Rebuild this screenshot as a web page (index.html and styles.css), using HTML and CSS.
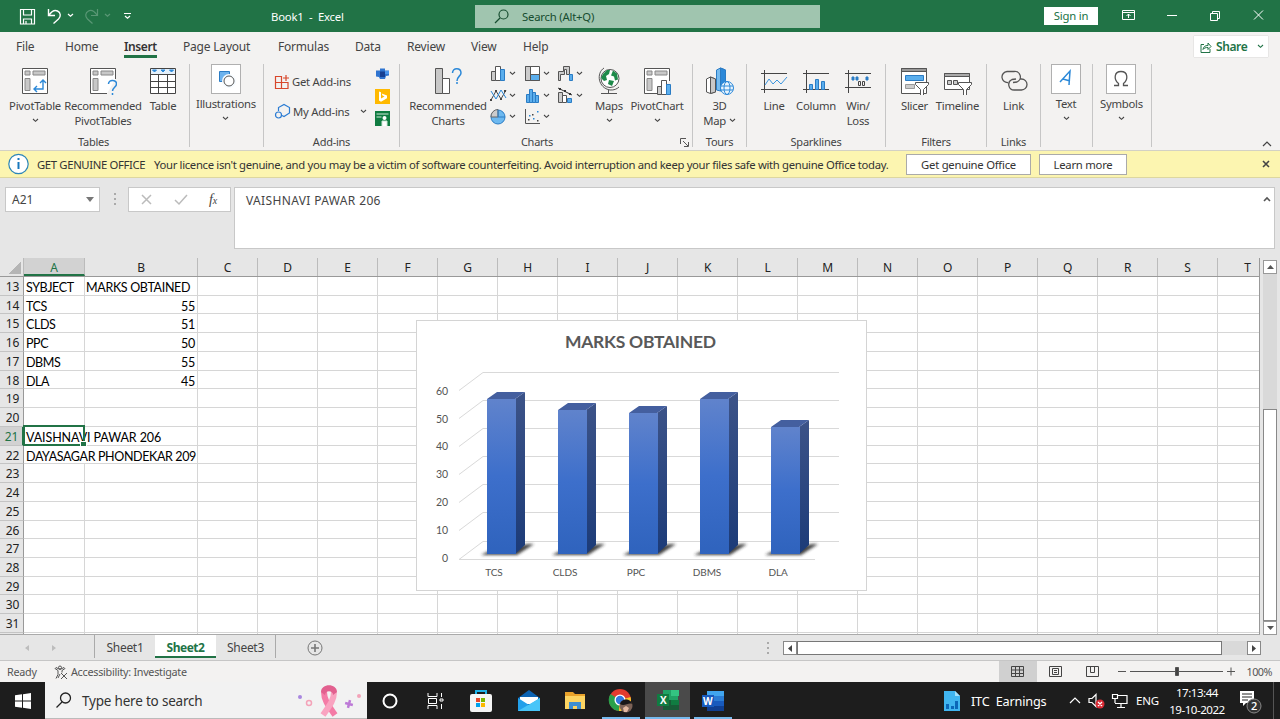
FILE: index.html
```html
<!DOCTYPE html>
<html lang="en">
<head>
<meta charset="utf-8">
<title>Book1 - Excel</title>
<link rel="stylesheet" href="styles.css">
</head>
<body>
<svg class="defs" aria-hidden="true">
  <symbol id="chev" viewBox="0 0 7 5"><path d="M1 1l2.500 2.300L6 1" fill="none" stroke="currentColor" stroke-width="1.100"/></symbol>
  <linearGradient id="front" x2="0" y2="1"><stop offset="0" stop-color="#6083cc"/><stop offset=".5" stop-color="#3d6fcb"/><stop offset="1" stop-color="#2f63bd"/></linearGradient>
  <linearGradient id="side" x2="0" y2="1"><stop offset="0" stop-color="#3c5388"/><stop offset="1" stop-color="#1c3b78"/></linearGradient>
  <filter id="soft" x="-20%" y="-50%" width="140%" height="200%"><feGaussianBlur stdDeviation="1.800"/></filter>
</svg>
<div class="app">
<header class="title">
  <div class="quick">
    <svg width="120" height="32" fill="none" stroke="#fff" stroke-width="1.200"><path d="M5.500 9.500h14v14.500h-14zM8.500 9.500v5.500h8v-5.500M8.500 24v-5h8v5M11 24v-3"/><path d="M33.500 9v6.500H40M34 15c2.500-3.500 5.500-5.500 8.500-4 3.500 1.800 3.500 5.500 1 8l-5 4.500" stroke-width="1.400"/><path d="M53 14l2.500 2.300 2.500-2.300"/><g opacity=".25"><path d="M82.500 9v6.500H76M82 15c-2.500-3.500-5.500-5.500-8.500-4-3.500 1.800-3.500 5.500-1 8l5 4.500"/><path d="M90 14l2.500 2.300 2.500-2.300"/></g><path d="M109 13.500h7M110 16l2.500 2.300 2.500-2.300"/></svg>
  </div>
  <div class="book">Book1&nbsp; -&nbsp; Excel</div>
  <div class="find"><svg width="16" height="16" fill="none" stroke="#174d30" stroke-width="1.200"><circle cx="9.500" cy="6.500" r="4.500"/><path d="M6 10l-5 5"/></svg><span>Search (Alt+Q)</span></div>
  <div class="signin">Sign in</div>
  <svg class="wins" width="160" height="32" fill="none" stroke="#fff"><path d="M4.500 10.500h12v9h-12zM4.500 12.500h12M10.500 18v-4M8.500 16l2-2 2 2M49 15.500h10M92.500 13.500h7v7h-7zM94.500 13.500v-2h7v7h-2M136 10.500l9 9M145 10.500l-9 9"/></svg>
</header>
<nav class="tabs">
  <span>File</span><span>Home</span><span class="on">Insert</span><span>Page Layout</span><span>Formulas</span><span>Data</span><span>Review</span><span>View</span><span>Help</span>
  <div class="share"><svg width="12" height="12" fill="none" stroke="#217346"><path d="M4 3.500H1v8h9V8M3 8.500c.5-3 2-4 5-4V2l3 3.500-3 3v-2c-2.500 0-4 .5-5 2z"/></svg><b>Share</b><svg width="7" height="5"><use href="#chev"/></svg></div>
</nav>
<section class="ribbon">
  <div class="group g-tables"><div class="items">
    <div class="item w60"><svg width="28" height="28" fill="#fff" stroke="#555"><path d="M1.500 1.500h25v25h-25z"/><path d="M4 4h5v4H4zM12 4h12v4H12zM4 11.500h5v12H4z" fill="#c8c8c8" stroke="#888"/><path d="M13 22h9v-9M16 19l-3 3 3 3M19 16l3-3 3 3" fill="none" stroke="#2b88d8" stroke-width="1.400"/></svg><span>PivotTable</span><svg class="dn"><use href="#chev"/></svg></div>
    <div class="item w76"><svg width="28" height="28" fill="#fff" stroke="#555"><path d="M18 26.500H1.500v-25h25V12"/><path d="M4 4h5v4H4zM12 4h12v4H12zM4 11.500h5v12H4z" fill="#c8c8c8" stroke="#888"/><path d="M19.500 17c0-5 8-4.500 8 0 0 3-4 3.500-4 7M23.500 26v2" fill="none" stroke="#2b88d8" stroke-width="1.500"/></svg><span>Recommended<br>PivotTables</span></div>
    <div class="item w44"><svg width="28" height="28" fill="#fff" stroke="#444"><path d="M1.500 1.500h25v25h-25zM1.500 7.500h25M1.500 14.500h25M1.500 20.500h25M9.500 7v19M18.500 7v19"/><path d="M2 2h24v5H2z" fill="#e3f0fb" stroke="none"/><path d="M3.500 3h4l-2 2zM12 3h4l-2 2zM20.500 3h4l-2 2z" fill="#2b88d8" stroke="#2b88d8"/></svg><span>Table</span></div>
  </div><div class="cap">Tables</div></div>
  <div class="group g-ill"><div class="items mid"><div class="item"><svg class="box" width="30" height="30"><path d="M7.500 6.500h10v10h-10z" fill="#6db3ee" stroke="#2b7cc4"/><circle cx="17" cy="16" r="5.500" fill="#fff" stroke="#f6fbff" stroke-width="3"/><circle cx="17" cy="16" r="5" fill="#fff" stroke="#555"/></svg><span>Illustrations</span><svg class="dn"><use href="#chev"/></svg></div></div></div>
  <div class="group g-add"><div class="items">
    <div class="addins"><div><svg width="16" height="16" fill="none" stroke="#d8472b" stroke-width="1.200"><path d="M1.500 2.500h6v12h-6zM1.500 8.500h12.500v6H7.500M12 1v6M9 4h6"/></svg>Get Add-ins</div><div><svg width="17" height="17" fill="none" stroke="#2b7cd3" stroke-width="1.200"><path d="M4.500 8V4.500L10 1.500l5.500 3v5.500L10 13.500 8 12.500"/><circle cx="4.500" cy="12" r="3"/></svg>My Add-ins<svg class="gap" width="7" height="5"><use href="#chev"/></svg></div></div>
    <div class="minis"><svg width="15" height="15"><path d="M1 3.500h4V1.500h5v2h4v5l-3 .5-1 3H5l-1-2-3-.5z" fill="#2f74d0"/><path d="M5 4.500h5V10H5z" fill="#173f91"/><path d="M10 4h4v3h-4z" fill="#4b96ed"/></svg><svg width="15" height="15"><path d="M0 0h15v15H0z" fill="#ffb900"/><path d="M4 2.500l2 .8v6.200l3.500-2-2-1-.8-2L12 6.500v2.800l-6 3.400-2-1.200z" fill="#fff"/></svg><svg width="15" height="15"><path d="M0 0h15v15H0z" fill="#107c41"/><circle cx="9.500" cy="7" r="2" fill="#fff"/><path d="M7 15v-5h5v5M1.500 3h12M1.500 6h5" fill="#fff" stroke="#cfe8d9"/></svg></div>
  </div><div class="cap">Add-ins</div></div>
  <div class="group g-charts"><div class="items">
    <div class="item w76 ml9"><svg width="28" height="28" fill="#fff" stroke="#555"><path d="M1.500 1.500h7v25h-7z" fill="#c8c8c8"/><path d="M8.500 11.500h7v15h-7z"/><path d="M18.500 6c0-6 8.500-5.500 8.500 0 0 3-4 3.500-4 8M23 15v2" fill="none" stroke="#2b88d8" stroke-width="1.500"/></svg><span>Recommended<br>Charts</span></div>
    <div class="minigrid">
      <div><svg width="17" height="17" fill="#fff" stroke="#555"><path d="M1.500 6.500h4v9h-4z" fill="#ccc"/><path d="M5.500 1.500h5v14h-5z"/><path d="M10.500 4.500h4v11h-4z" fill="#5aaeed" stroke="#2b7cc4"/></svg><svg class="c"><use href="#chev"/></svg></div>
      <div><svg width="17" height="17" fill="#fff" stroke="#555"><path d="M1.500 1.500h14v14h-14z"/><path d="M1.500 1.500h5v14h-5z" fill="#ccc"/><path d="M6.500 9.500h9v6h-9z" fill="#5aaeed"/></svg><svg class="c"><use href="#chev"/></svg></div>
      <div><svg width="17" height="17" fill="#ccc" stroke="#555"><path d="M1.500 15.500v-9h5v-5h6v8h-3v-5h-2v5h-4v6z"/><path d="M12.500 9.500h3v6h-3z" fill="#5aaeed" stroke="#2b7cc4"/></svg><svg class="c"><use href="#chev"/></svg></div>
      <div><svg width="17" height="17" fill="none"><path d="M1 13l5-9 5 8 5-9" stroke="#444"/><path d="M1 4l5 8 5-9 5 8" stroke="#2b88d8"/><path d="M0 12h2v2H0zM5 3h2v2H5zM10 11h2v2h-2zM14 3h2v2h-2z" fill="#444"/></svg><svg class="c"><use href="#chev"/></svg></div>
      <div><svg width="17" height="17" fill="#5aaeed" stroke="#2b7cc4"><path d="M2.500 7.500h3v8h-3zM5.500 2.500h3v13h-3zM8.500 5.500h3v10h-3zM11.500 8.500h3v7h-3z"/></svg><svg class="c"><use href="#chev"/></svg></div>
      <div><svg width="17" height="17" fill="#ccc" stroke="#555"><path d="M1.500 5.500h4v10h-4z"/><path d="M5.500 8.500h4v7h-4z" fill="#fff"/><path d="M10.500 11.500h4v4h-4z" fill="#5aaeed" stroke="#2b7cc4"/><path d="M1 1l14 7" stroke="#333"/><path d="M2 1h2v2H2zM7 3h2v2H7zM12 6h2v2h-2z" fill="#333" stroke="none"/></svg><svg class="c"><use href="#chev"/></svg></div>
      <div><svg width="17" height="17"><circle cx="8" cy="9" r="7" fill="#6db9f0" stroke="#2b7cc4"/><path d="M8 9V1.500a7 7 0 0 0-7 7.500z" fill="#ccc" stroke="#666"/><path d="M8 2v7h7" fill="none" stroke="#2b7cc4"/></svg><svg class="c"><use href="#chev"/></svg></div>
      <div><svg width="17" height="17"><path d="M1.500 1v14.500H16" fill="none" stroke="#555"/><path d="M4 11h1.500v1.500H4zM8 6h1.500v1.500H8zM13 12h1.500v1.500H13z" fill="#444"/><path d="M5 7h1.500v1.500H5zM13 3h1.500v1.500H13zM9 10h1.500v1.500H9z" fill="#2b88d8"/></svg><svg class="c"><use href="#chev"/></svg></div>
    </div>
    <div class="item w44"><svg width="28" height="28" fill="none" stroke="#555"><circle cx="15" cy="11.500" r="9" fill="#fff"/><path d="M8 7l4-4h3l-1 4-3 2 1 4-3 1-3-3zM18 3.500l4 3 1 6-3 1-1-4-3-1zM14 13l5 1-2 5-4-2z" fill="#1e8a4a" stroke="none"/><path d="M9 1C1 6 3 21 15 23c4 .3 7-1 9-3M13.500 23v3.500M6 26.500h16"/></svg><span>Maps</span><svg class="dn"><use href="#chev"/></svg></div>
    <div class="item w54 pc"><svg width="28" height="28" fill="#fff" stroke="#555"><path d="M14 26.500H1.500v-25h25V14"/><path d="M4 4h5v4H4zM12 4h12v4H12zM4 11.500h5v12H4z" fill="#c8c8c8" stroke="#888"/><path d="M14.500 19.500h4v8h-4z" fill="#ccc"/><path d="M18.500 13.500h5v14h-5z"/><path d="M23.500 17.500h4v10h-4z" fill="#5aaeed" stroke="#2b7cc4"/></svg><span>PivotChart</span><svg class="dn"><use href="#chev"/></svg></div>
  </div><div class="cap">Charts<svg class="launch" width="9" height="9" fill="none" stroke="#555"><path d="M.5 6V.5H6M3 3l5 5M8.500 4v4.500H4"/></svg></div></div>
  <div class="group g-tour"><div class="items"><div class="item w54"><svg width="30" height="28" fill="#fff" stroke="#555"><path d="M1.500 12l4-2 5 2v13l-5 1.500-4-1.500z"/><path d="M5.500 10l5 2v13l-5 1.500z" fill="#c8c8c8"/><path d="M11.500 3l4-2 5 2v13l-5 8-4-1z" fill="#76bcf0" stroke="#2b7cc4"/><path d="M15.500 1l5 2v20l-5 1z" fill="#2b88d8" stroke="#2b7cc4"/><circle cx="22" cy="21" r="6.500" fill="#e9f4fd" stroke="#2b88d8"/><ellipse cx="22" cy="21" rx="3" ry="6.500" fill="none" stroke="#2b88d8"/><path d="M16 19h12M16 23h12" stroke="#2b88d8"/></svg><span>3D<br>Map <svg width="7" height="5"><use href="#chev"/></svg></span></div></div><div class="cap">Tours</div></div>
  <div class="group g-spark"><div class="items">
    <div class="item w38"><svg width="28" height="28" fill="none" stroke="#444"><path d="M1 6.500h26M1 22.500h26M4.500 3v23"/><path d="M5 18l4-6 4 5 4-4 4 4 6-7" stroke="#3b95de"/></svg><span>Line</span></div>
    <div class="item w46"><svg width="28" height="28" fill="none" stroke="#444"><path d="M1 6.500h26M1 22.500h26M4.500 3v23"/><path d="M7.500 17.500h3v5h-3zM13.500 12.500h3v10h-3zM19.500 14.500h3v8h-3z" fill="#5aaeed" stroke="#2b7cc4"/></svg><span>Column</span></div>
    <div class="item w38"><svg width="28" height="28" fill="none" stroke="#444"><path d="M1 6.500h26M1 20.500h26M4.500 3v23"/><path d="M8 10h2v3H8zM12 10h2v3h-2zM22 10h2v3h-2z" fill="#2b7cc4" stroke="#2b7cc4"/><path d="M14.500 14.500h2v4h-2zM18.500 14.500h2v4h-2z"/></svg><span>Win/<br>Loss</span></div>
  </div><div class="cap">Sparklines</div></div>
  <div class="group g-filt"><div class="items">
    <div class="item w43"><svg width="29" height="28" fill="#fff" stroke="#555"><path d="M1.500 1.500h25v25h-25z"/><path d="M1.500 1.500h25v3h-25z" fill="#999"/><path d="M5.500 8.500h18v5h-18z" fill="#5aaeed" stroke="#2b7cc4"/><path d="M5.500 17.500h9v4h-9z" fill="#ccc" stroke="#999"/><path d="M15.500 15.500h13v2l-5 5v6h-3v-6l-5-5z"/></svg><span>Slicer</span></div>
    <div class="item w43"><svg width="29" height="28" fill="#fff" stroke="#555"><path d="M1.500 6.500h25v16h-25z"/><path d="M1.500 6.500h25v3h-25z" fill="#aaa"/><path d="M4.500 13.500h4v4h-4zM10.500 13.500h4v4h-4z" fill="#ccc"/><path d="M15.500 15.500h13v2l-5 5v6h-3v-6l-5-5z"/></svg><span>Timeline</span></div>
  </div><div class="cap">Filters</div></div>
  <div class="group g-link"><div class="items"><div class="item w54"><svg width="28" height="28" fill="none" stroke="#555" stroke-width="1.300"><path d="M8 15.500a5.500 5.500 0 0 1-1-11h7a5.500 5.500 0 0 1 3 10.500l-4 .5M20 12h1.500a5.500 5.500 0 0 1 0 11h-7a5.500 5.500 0 0 1-2.500-10.500l4-.5"/></svg><span>Link</span></div></div><div class="cap">Links</div></div>
  <div class="group g-text"><div class="items mid"><div class="item"><svg class="box" width="30" height="30" fill="none" stroke="#2b88d8" stroke-width="1.500"><path d="M8 17l10-11-1 14M11 14l7 2"/></svg><span>Text</span><svg class="dn"><use href="#chev"/></svg></div></div></div>
  <div class="group g-sym"><div class="items mid"><div class="item"><svg class="box" width="30" height="30" fill="none" stroke="#555" stroke-width="1.300"><path d="M7 20.500h4.500v-2c-5-4-4.500-12 2.500-12s7.500 8 2.500 12v2H21"/></svg><span>Symbols</span><svg class="dn"><use href="#chev"/></svg></div></div></div>
  <svg class="collapse" width="10" height="6" fill="none" stroke="#444" stroke-width="1.200"><path d="M1 5l4-4 4 4"/></svg>
</section>
<section class="notice">
  <svg width="22" height="22"><circle cx="11.500" cy="11" r="9.700" fill="#fff" stroke="#2d86b8" stroke-width="1.200"/><path d="M10.500 5h2v2h-2zM10.500 9h2v7h-2z" fill="#1878bd"/></svg>
  <span class="n1">GET GENUINE OFFICE</span><span class="n2">Your licence isn't genuine, and you may be a victim of software counterfeiting. Avoid interruption and keep your files safe with genuine Office today.</span>
  <span class="btn b1">Get genuine Office</span><span class="btn b2">Learn more</span>
  <svg class="x" width="8" height="8" stroke="#444" stroke-width="1.600"><path d="M1 1l6 6M7 1L1 7"/></svg>
</section>
<section class="formula">
  <div class="name">A21<svg width="8" height="5"><path d="M0 0h8L4 5z" fill="#777"/></svg></div>
  <svg class="grip" width="4" height="14" fill="#aaa"><path d="M1 1h2v2H1zM1 6h2v2H1zM1 11h2v2H1z"/></svg>
  <div class="fx"><svg width="60" height="20" fill="none" stroke="#bbb" stroke-width="1.500"><path d="M3 5l9 9M12 5l-9 9M36 10l4 4 8-9"/></svg><i>f<small>x</small></i></div>
  <div class="input"><span>VAISHNAVI PAWAR 206</span><svg width="8" height="6" fill="none" stroke="#555" stroke-width="1.600"><path d="M1 5l3-3 3 3"/></svg></div>
</section>
<main class="sheet">
  <div class="gridarea">
    <div class="heads"><span class="corner"></span><span class="ha">A</span><span class="hb">B</span><span>C</span><span>D</span><span>E</span><span>F</span><span>G</span><span>H</span><span>I</span><span>J</span><span>K</span><span>L</span><span>M</span><span>N</span><span>O</span><span>P</span><span>Q</span><span>R</span><span>S</span><span>T</span></div>
    <div class="rows">
      <div class="row"><b>13</b><span class="a">SYBJECT</span><span class="h">MARKS OBTAINED</span></div>
      <div class="row"><b>14</b><span class="a">TCS</span><span class="n">55</span></div>
      <div class="row"><b>15</b><span class="a">CLDS</span><span class="n">51</span></div>
      <div class="row"><b>16</b><span class="a">PPC</span><span class="n">50</span></div>
      <div class="row"><b>17</b><span class="a">DBMS</span><span class="n">55</span></div>
      <div class="row"><b>18</b><span class="a">DLA</span><span class="n">45</span></div>
      <div class="row"><b>19</b></div>
      <div class="row"><b>20</b></div>
      <div class="row sel"><b>21</b><span class="wide w21">VAISHNAVI PAWAR 206</span><i class="cursor"></i></div>
      <div class="row"><b>22</b><span class="wide w22">DAYASAGAR PHONDEKAR 209</span></div>
      <div class="row"><b>23</b></div><div class="row"><b>24</b></div><div class="row"><b>25</b></div><div class="row"><b>26</b></div><div class="row"><b>27</b></div><div class="row"><b>28</b></div><div class="row"><b>29</b></div><div class="row"><b>30</b></div><div class="row"><b>31</b></div><div class="row"><b></b></div>
      <svg class="chart" width="451" height="271">
        <rect x=".5" y=".5" width="450" height="270" fill="#fff" stroke="#d4d4d4"/>
        <text x="149" y="28" textLength="151" class="ct">MARKS OBTAINED</text>
        <path class="gl" d="M43 70.500L67 52.500H423M43 98.500L67 80.500H423M43 126.500L67 108.500H423M43 154.500L67 136.500H423M43 182.500L67 164.500H423M43 210.500L67 192.500H423M43 239.500L67 221.500H423M43 239.500H399"/>
        <g class="ax" text-anchor="end"><text x="32" y="75">60</text><text x="32" y="103">50</text><text x="32" y="130">40</text><text x="32" y="158">30</text><text x="32" y="186">20</text><text x="32" y="214">10</text><text x="32" y="242">0</text></g>
        <g fill="#222" opacity=".85" filter="url(#soft)"><path d="M65 235l10-5 38-6h5l-17 11zM136 235l10-5 38-6h5l-17 11zM207 235l10-5 38-6h5l-17 11zM278 235l10-5 38-6h5l-17 11zM349 235l10-5 38-6h5l-17 11z"/></g>
        <g fill="url(#side)"><path d="M99 79l10-7v153l-10 9z"/><path d="M170 90l10-7v142l-10 9z"/><path d="M241 93l10-7v139l-10 9z"/><path d="M312 79l10-7v153l-10 9z"/><path d="M383 107l10-7v125l-10 9z"/></g>
        <path fill="#445f9f" d="M71 79l10-7h28l-10 7zM142 90l10-7h28l-10 7zM213 93l10-7h28l-10 7zM284 79l10-7h28l-10 7zM355 107l10-7h28l-10 7z"/>
        <g fill="url(#front)"><rect x="71" y="79" width="29" height="155"/><rect x="142" y="90" width="29" height="144"/><rect x="213" y="93" width="29" height="141"/><rect x="284" y="79" width="29" height="155"/><rect x="355" y="107" width="29" height="127"/></g>
        <g class="ax cat" text-anchor="middle"><text x="78" y="256">TCS</text><text x="149" y="256">CLDS</text><text x="220" y="256">PPC</text><text x="291" y="256">DBMS</text><text x="362" y="256">DLA</text></g>
      </svg>
    </div>
  </div>
  <div class="vscroll"><span class="sb"><svg width="7" height="4"><path d="M0 4h7L3.500 0z" fill="#555"/></svg></span><span class="track"></span><span class="thumb"></span><span class="sb"><svg width="7" height="4"><path d="M0 0h7L3.500 4z" fill="#555"/></svg></span></div>
</main>
<footer class="sheets">
  <svg class="nav" width="94" height="24"><path d="M29 10v6l-4-3zM52 10v6l4-3z" fill="#bdbdbd"/></svg>
  <span class="s1">Sheet1</span><span class="s2">Sheet2</span><span class="s3">Sheet3</span>
  <svg class="plus" width="16" height="16" fill="none" stroke="#777"><circle cx="8" cy="8" r="7"/><path d="M4 8h8M8 4v8" stroke-width="1.600"/></svg>
  <svg class="grip" width="4" height="14" fill="#aaa"><path d="M1 1h2v2H1zM1 6h2v2H1zM1 11h2v2H1z"/></svg>
  <div class="hscroll"><span class="hb1"><svg width="4" height="7"><path d="M4 0v7L0 3.500z" fill="#444"/></svg></span><span class="hthumb"></span><span class="htrack"></span><span class="hb1"><svg width="4" height="7"><path d="M0 0v7l4-3.500z" fill="#444"/></svg></span></div>
</footer>
<footer class="status">
  <span class="ready">Ready</span>
  <svg width="14" height="14" fill="none" stroke="#555"><circle cx="6" cy="2.500" r="1.500"/><path d="M1 3.500l3 2v4l-2 4M11 3.500l-3 2v2M6 9l-2 4M1 3.500L2 2.500l4 2 4-2 1 1M7 8l6 6M13 8l-6 6"/></svg>
  <span class="acc">Accessibility: Investigate</span>
  <div class="views"><span class="v on"><svg width="13" height="13" fill="none" stroke="#444"><path d="M.5 1.500h12v10H.5zM.5 5h12M.5 8.500h12M4.500 1v11M8.500 1v11"/></svg></span><span class="v"><svg width="13" height="13" fill="none" stroke="#444"><path d="M.5 1.500h12v10H.5zM3.500 3.500h6v6h-6zM5 5.500h3M5 7.500h3"/></svg></span><span class="v"><svg width="13" height="13" fill="none" stroke="#444"><path d="M.5 1.500h12v10H.5zM4.500 1.500v6h4v-6"/></svg></span></div>
  <svg class="zoom" width="122" height="16" stroke="#555"><path d="M3 7.500h8M15 7.500h93M112 7.500h8M116 3.500v8" fill="none"/><path d="M60.500 3.500h3v8h-3z" fill="#444"/></svg>
  <span class="pct">100%</span>
</footer>
<footer class="taskbar">
  <div class="start"><svg width="16" height="16" fill="#fff"><path d="M0 2.300l7-1v6.200H0zM8 1.200L16 0v7.500H8zM0 8.500h7v6.200l-7-1zM8 8.500h8V16l-8-1.200z"/></svg></div>
  <div class="tsearch"><svg width="16" height="16" fill="none" stroke="#222" stroke-width="1.300"><circle cx="9.500" cy="6" r="5"/><path d="M6 10l-5.500 5.500"/></svg><span>Type here to search</span>
    <svg class="ribbonpic" width="66" height="36"><circle cx="3" cy="15" r="2" fill="#a987e0"/><circle cx="12" cy="21" r="2.500" fill="none" stroke="#f4a3b9" stroke-width="1.500"/><path d="M27 10c0 8 4 13 11 23" fill="none" stroke="#f47ba6" stroke-width="6"/><path d="M37 10c0 8-4 13-11 23" fill="none" stroke="#f9a3c0" stroke-width="6"/><path d="M24 10c0-9 16-9 16 0l-4 3c0-5-8-5-8 0z" fill="#e2608f"/><path d="M52 18v8M48 22h8" transform="rotate(15 52 22)" stroke="#bd7ad7" stroke-width="2.500"/><circle cx="62" cy="14" r="2" fill="#f4a3b9"/></svg></div>
  <div class="apps">
    <span class="ap w45"><svg width="18" height="18"><circle cx="9" cy="9" r="6.500" fill="none" stroke="#fff" stroke-width="2"/></svg></span>
    <span class="ap w45"><svg width="18" height="18" fill="none" stroke="#fff"><path d="M2 1v3.500h9V1M2 17v-3.500h9V17M2.500 6.500h8v5h-8zM15.500 1v4M15.500 12v5M14 7h3v2h-3z"/></svg></span>
    <span class="ap w48"><svg width="24" height="24"><path d="M7 7V2h10v5" fill="none" stroke="#20b2e8" stroke-width="2"/><rect x="1" y="5" width="22" height="18" rx="2" fill="#f5f5f5"/><path d="M7 9h4v4H7z" fill="#e7472c"/><path d="M12 9h4v4h-4z" fill="#7ab800"/><path d="M7 14h4v4H7z" fill="#00a2ed"/><path d="M12 14h4v4h-4z" fill="#fbb900"/></svg></span>
    <span class="ap w47"><svg width="24" height="22"><path d="M1 8l11-8 11 8v13H1z" fill="#0b63b3"/><path d="M3 7h18v7H3z" fill="#fff"/><path d="M1 8l11 7 11-7v13H1z" fill="#22a0ea"/><path d="M1 21L23 8v13z" fill="#48c5f8"/></svg></span>
    <span class="ap w45"><svg width="22" height="20"><path d="M1 1h8l2 2h10v15H1z" fill="#e9a22b"/><path d="M1 5h20v13H1z" fill="#fcd462"/><path d="M5 18v-7h12v7h-4v-3H9v3z" fill="#3d8ed1"/></svg></span>
    <span class="ap w48 run"><svg width="26" height="26"><circle cx="12" cy="12" r="11" fill="#e33b2e"/><path d="M12 12L2.500 6A11 11 0 0 0 11 23z" fill="#2aa04a"/><path d="M12 12l10.500-3A11 11 0 0 1 11 23z" fill="#f9c72b"/><circle cx="12" cy="12" r="5.500" fill="#fff"/><circle cx="12" cy="12" r="4.200" fill="#3478df"/><circle cx="18" cy="18" r="6.500" fill="#7c6257"/><path d="M12 16c1-6 11-6 12 0-3-2-8 3-12 0z" fill="#191719"/><path d="M15 20l3-2 3 2-2 4h-3z" fill="#e2b8a2"/></svg></span>
    <span class="ap w45 active"><svg width="24" height="22"><path d="M7 1h15v20H7z" fill="#21a366"/><path d="M15 1h8v6h-8z" fill="#33c481"/><path d="M7 11h16v10H7z" fill="#185c37"/><path d="M15 11h8v5h-8z" fill="#107c41"/><path d="M1 5h12v12H1z" fill="#107c41"/><text x="4" y="15" class="lg">X</text></svg></span>
    <span class="ap w45 run"><svg width="24" height="22"><path d="M6 1h17v20H6z" fill="#41a5ee"/><path d="M6 6h17v5H6z" fill="#2b7cd3"/><path d="M6 11h17v5H6z" fill="#185abd"/><path d="M6 16h17v5H6z" fill="#103f91"/><path d="M1 5h12v12H1z" fill="#185abd"/><text x="2" y="15" class="lg">W</text></svg></span>
  </div>
  <div class="tray">
    <svg class="itc" width="18" height="22"><path d="M1 1h11l5 5v15H1z" fill="#40b5f0"/><path d="M12 1v5h5z" fill="#a5e1fb"/><path d="M3 14h3v5H3zM8 16h3v3H8zM12 11h3v8h-3z" fill="#0b67b8"/></svg>
    <span class="earn">ITC&nbsp; Earnings</span>
    <svg class="sys" width="66" height="20" fill="none" stroke="#fff" stroke-width="1.200"><path d="M2 12l5-5 5 5M21 7.500h3l4-4v12l-4-4h-3z"/><circle cx="32" cy="13" r="4.500" fill="#d92b35" stroke="none"/><path d="M30 11l4 4M34 11l-4 4M49 4.500h10v8H47M53 13v4M49 16.500h8M44.500 3.500h5v4h-5zM47 8v4"/></svg>
    <span class="eng">ENG</span>
    <div class="clock"><div>17:13:44</div><div>19-10-2022</div></div>
    <svg class="note" width="26" height="26"><path d="M3 3h14v12H9l-3 3v-3H3z" fill="#fff"/><path d="M5 6h10M5 9h10M5 12h6" stroke="#222"/><circle cx="17" cy="18" r="7" fill="#333" stroke="#888"/><text x="14" y="22" class="lg2">2</text></svg>
    <i class="edge"></i>
  </div>
</footer>
</div>
</body>
</html>
```
FILE: styles.css
```css
* { box-sizing: border-box; }
body { margin: 0; font-family: "Noto Sans", "Open Sans", sans-serif; font-size: 11.300px; color: #444; letter-spacing: -0.25px; overflow: hidden; }
svg { flex: none; display: block; }
.defs { position: absolute; width: 0; height: 0; }
.app { width: 1280px; height: 719px; display: flex; flex-direction: column; background: #e6e6e6; white-space: nowrap; }
.title { height: 32px; background: #217346; color: #fff; display: flex; align-items: center; letter-spacing: -0.2px; }
.quick { width: 271px; padding-left: 15px; }
.book { width: 204px; }
.find { width: 345px; height: 23px; background: #a0c5af; color: #174d30; display: flex; align-items: center; gap: 12px; padding-left: 19px; }
.signin { margin-left: 224px; width: 54px; height: 18px; line-height: 18px; background: #fff; color: #217346; text-align: center; }
.wins { margin-left: 20px; }
.tabs { height: 28px; background: #f3f2f1; display: grid; grid-template-columns: 49px 59px 59px 95px 77px 52px 64px 52px 670px; padding-left: 16px; font-size: 12px; line-height: 29px; letter-spacing: -0.2px; position: relative; }
.tabs .on { font-weight: 600; width: 33px; height: 26px; border-bottom: 3px solid #217346; color: #333; letter-spacing: -0.4px; }
.share { position: absolute; left: 1194px; top: 4px; width: 74px; height: 21px; background: #fff; box-shadow: 0 0 1px #aaa; color: #217346; display: flex; align-items: center; gap: 4px; padding-left: 6px; }
.share b { font-weight: 600; width: 37px; letter-spacing: -0.4px; }
.ribbon { height: 91px; background: #f3f2f1; border-bottom: 1px solid #d3d1c4; display: flex; padding-top: 4px; position: relative; }
.group { height: 83px; border-right: 1px solid #c6c6c6; display: flex; flex-direction: column; justify-content: space-between; }
.items { display: flex; height: 70px; padding-top: 3px; }
.items.mid { padding-top: 0; justify-content: center; }
.item { display: flex; flex-direction: column; align-items: center; line-height: 15px; text-align: center; }
.item > span { margin-top: 3px; }
.item > span svg { display: inline-block; vertical-align: 2px; }
.item .dn { width: 7px; height: 5px; margin-top: 5px; }
.box { background: #fff; border: 1px solid #b0b0b0; }
.mid .item > span { margin-top: 2px; }
.mid .item { margin-left: -1px; }
.cap { text-align: center; line-height: 14px; height: 12px; font-size: 11px; position: relative; }
.g-tables .cap { padding-right: 7px; }
.g-charts .cap { padding-right: 18px; }
.launch { position: absolute; right: 3px; top: 3px; }
.g-tables { width: 190px; padding-left: 5px; } .g-ill { width: 74px; } .g-add { width: 136px; } .g-charts { width: 293px; }
.g-tour { width: 54px; } .g-spark { width: 139px; } .g-filt { width: 101px; } .g-link { width: 54px; } .g-text { width: 52px; } .g-sym { width: 59px; }
.w38 { width: 38px; } .w43 { width: 43px; } .w44 { width: 44px; } .w46 { width: 46px; } .w54 { width: 54px; } .w60 { width: 60px; } .w76 { width: 76px; }
.ml9 { margin-left: 10px; }
.pc { margin-left: -1px; }
.g-spark .items, .g-filt .items { justify-content: center; }
.addins { width: 111px; padding: 6px 0 0 10px; display: flex; flex-direction: column; gap: 13px; }
.addins div { display: flex; align-items: center; gap: 2px; height: 17px; }
.addins .gap { margin-left: 8px; }
.minis { display: flex; flex-direction: column; gap: 7px; }
.minigrid { display: grid; grid-template-columns: 34px 33px 34px; grid-auto-rows: 21.500px; margin: -4px -4px 0 4px; }
.minigrid div { display: flex; align-items: center; gap: 2px; }
.minigrid .c { width: 7px; height: 5px; }
.collapse { position: absolute; left: 1262px; top: 81px; }
.notice { height: 27px; background: #fcf5b0; border-bottom: 1px solid #ddd7a0; display: flex; align-items: center; padding-left: 7px; color: #333; position: relative; }
.n1 { margin-left: 8px; width: 117px; letter-spacing: -0.35px; }
.n2 { width: 752px; letter-spacing: -0.330px; }
.btn { background: #fff; border: 1px solid #aaa; height: 21px; line-height: 20px; text-align: center; }
.b1 { width: 125px; } .b2 { width: 88px; margin-left: 8px; }
.x { margin-left: 135px; }
.formula { height: 80px; padding: 9px 5px; display: flex; font-size: 12px; }
.name { width: 95px; height: 25px; background: #fff; border: 1px solid #c8c8c8; line-height: 23px; padding: 0 5px 0 6px; display: flex; justify-content: space-between; align-items: center; letter-spacing: 0; }
.grip { margin: 5px 12px 0 13px; }
.fx { width: 103px; margin-left: -1px; height: 25px; background: #fff; border: 1px solid #c8c8c8; display: flex; align-items: center; gap: 10px; padding-left: 10px; }
.fx i { font: italic 14px "Liberation Serif", serif; } .fx small { font-size: 10px; }
.input { margin-left: 3px; flex: 1; height: 62px; background: #fff; border: 1px solid #c8c8c8; padding: 4px 3px 0 11px; display: flex; justify-content: space-between; }
.input span { letter-spacing: 0.360px; }
.input svg { margin-top: 4px; }
.sheet { height: 377px; display: flex; }
.gridarea { width: 1260px; overflow: hidden; border-right: 1px solid #999; border-bottom: 1px solid #aaa; }
.heads { display: flex; height: 19px; border-bottom: 1px solid #999; }
.heads span { flex: none; width: 60px; border-right: 1px solid #bbb; text-align: center; color: #222; line-height: 19px; font-size: 12px; }
.heads .corner { width: 24px; background: linear-gradient(135deg, transparent 62%, #b5b5b5 62%) 4px 0 / 17px 16px no-repeat; }
.heads .ha { width: 61px; background: #d2d2d2; color: #217346; border-bottom: 2px solid #217346; }
.heads .hb { width: 113px; }
.rows { position: relative; background: linear-gradient(90deg, #d6d6d6 1px, transparent 1px) 84px 0 / 1176px 100% no-repeat, repeating-linear-gradient(90deg, #d6d6d6 0 1px, transparent 1px 60px) 197px 0 / 1063px 100% no-repeat, #fff; }
.row { height: 18.740px; display: flex; border-bottom: 1px solid #d6d6d6; font-family: Lato, sans-serif; font-size: 12.500px; color: #000; line-height: 21px; position: relative; }
.row b { font: 12px/20px "Noto Sans", sans-serif; width: 24px; background: #e6e6e6; border-right: 1px solid #999; border-bottom: 1px solid #c4c4c4; text-align: right; padding-right: 4px; color: #222; height: 18.740px; }
.row .a { width: 60px; padding-left: 2px; letter-spacing: -0.4px; } .row .h { padding-left: 2px; letter-spacing: -0.330px; } .row .n { width: 111px; text-align: right; }
.row.sel b { background: #d2d2d2; color: #217346; border-right: 2px solid #217346; }
.wide { background: #fff; margin-left: 1px; padding-left: 1px; height: 17.700px; }
.w21 { letter-spacing: -0.1px; } .w22 { letter-spacing: -0.370px; }
.cursor { position: absolute; left: 23px; top: -2px; width: 62px; height: 21px; border: 2px solid #217346; }
.cursor::after { content: ""; position: absolute; right: -3px; bottom: -3px; width: 5px; height: 5px; background: #217346; box-shadow: 0 0 0 1px #fff; }
.chart { position: absolute; left: 416px; top: 43px; }
.ct { font: 700 17.500px Lato, sans-serif; fill: #595959; letter-spacing: 0; }
.ax { font: 10.500px Lato, sans-serif; fill: #555; letter-spacing: -0.1px; }
.cat { font-size: 10px; }
.gl { fill: none; stroke: #d9d9d9; }
.vscroll { width: 14px; margin: 2px 0 0 3px; display: flex; flex-direction: column; background: #d9d9d9; }
.sb { height: 14px; background: #fff; border: 1px solid #999; display: flex; align-items: center; justify-content: center; }
.track { height: 135px; } .thumb { flex: 1; background: #fff; border: 1px solid #888; }
.sheets { height: 26px; border-bottom: 1px solid #c6c6c6; display: flex; align-items: flex-start; font-size: 12px; line-height: 25px; text-align: center; letter-spacing: -0.3px; }
.sheets span { height: 23px; }
.s1 { width: 61px; border-left: 1px solid #aaa; } .s2 { width: 61px; background: #fff; color: #217346; font-weight: 700; border-bottom: 2px solid #217346; letter-spacing: -0.5px; } .s3 { width: 60px; border-right: 1px solid #aaa; }
.plus { margin: 5px 0 0 31px; }
.sheets .grip { margin: 6px 0 0 443px; }
.hscroll { display: flex; margin: 6px 0 0 13px; height: 14px; width: 478px; }
.hscroll span { height: 14px; }
.hb1 { width: 14px; background: #fff; border: 1px solid #888; display: flex; align-items: center; justify-content: center; }
.hthumb { width: 425px; background: #fff; border: 1px solid #777; } .htrack { width: 25px; background: #d9d9d9; }
.status { height: 21px; background: #f3f2f1; display: flex; align-items: center; font-size: 10.800px; padding-left: 7px; color: #555; letter-spacing: -0.28px; }
.ready { width: 47px; } .acc { margin-left: 3px; width: 928px; }
.views { display: flex; } .v { width: 37.500px; height: 21px; display: flex; align-items: center; justify-content: center; } .v.on { background: #d0d0d0; }
.zoom { margin-left: 3px; } .pct { margin-left: 10px; letter-spacing: -0.5px; }
.taskbar { height: 37px; background: #1d1d1d; color: #fff; display: flex; align-items: center; letter-spacing: -0.2px; }
.start { width: 45px; padding-left: 15px; }
.tsearch { width: 322px; height: 37px; background: #f2f2f2; border-bottom: 1px solid #bbb; color: #333; display: flex; align-items: center; padding-left: 11px; font-size: 13.500px; }
.tsearch span { width: 215px; margin: 1px 0 0 10px; }
.apps { display: flex; height: 37px; }
.ap { display: flex; align-items: center; justify-content: center; height: 37px; width: 45px; } .w47 { width: 47px; } .w48 { width: 48px; }
.run { background: linear-gradient(#76b9ed, #76b9ed) center bottom / 38px 2px no-repeat; } .active { background: #4a4a4a; border-bottom: 2px solid #76b9ed; }
.lg { font: 700 10px "Open Sans", sans-serif; fill: #fff; } .lg2 { font: 600 11px "Open Sans", sans-serif; fill: #fff; }
.tray { display: flex; align-items: center; flex: 1; height: 37px; padding-left: 208px; }
.earn { font-size: 12.700px; width: 97px; margin-left: 10px; }
.eng { margin-left: 2px; width: 26px; font-size: 11.500px; }
.clock { width: 64px; margin-left: 3px; text-align: center; line-height: 17px; font-size: 11.600px; letter-spacing: -0.5px; }
.note { margin-left: 8px; } .edge { width: 1px; height: 37px; background: #555; margin-left: 10px; }
```
